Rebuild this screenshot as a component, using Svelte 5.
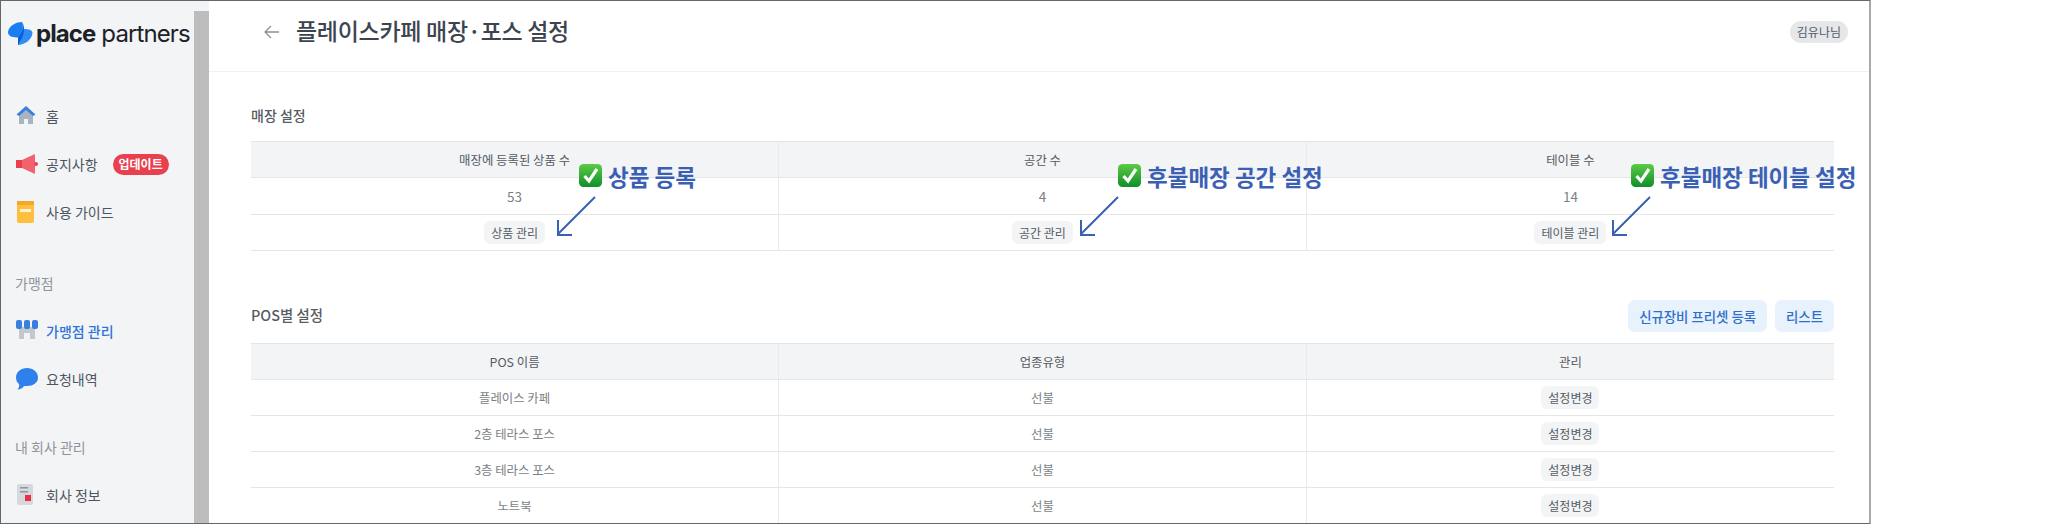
<script>
	const top = [
		{ head: '매장에 등록된 상품 수', count: '53', action: '상품 관리' },
		{ head: '공간 수', count: '4', action: '공간 관리' },
		{ head: '테이블 수', count: '14', action: '테이블 관리' }
	];
	const posList = ['플레이스 카페', '2층 테라스 포스', '3층 테라스 포스', '노트북'];
	// arrow is the x offset of the arrow box from the check icon
	const notes = [
		{ text: '상품 등록', left: 578, arrow: -24 },
		{ text: '후불매장 공간 설정', left: 1117, arrow: -40 },
		{ text: '후불매장 테이블 설정', left: 1630, arrow: -21 }
	];
</script>

<div class="frame">
	<aside class="sidebar">
		<div class="logo">
			<svg width="25" height="23" viewBox="0 0 25 23">
				<path d="M14 0 C9 0 1 3 0 10 C0 15 6 15.500 10 15.500 L15 7 Z" fill="#1a7df0" />
				<path d="M10 23 C16 23 24 18 24.500 11 C24.500 7 18 7 15 7 L10 15.500 Z" fill="#2f8cf5" />
				<path d="M14 0 L15 7 L10 15.500 L10 23 C14 17 19 8 14 0 Z" fill="#0b5fd8" />
			</svg>
			<span class="logo-text"><b>place</b> partners</span>
		</div>

		<nav class="nav">
			<a class="item">
				<svg width="20" height="20" viewBox="0 0 20 20">
					<path d="M3 9 L10 3 L17 9 V19 H12 V14 H8 V19 H3 Z" fill="#a9b4c2" />
					<path d="M0.500 9.500 L10 1 L19.500 9.500 L17 11 L10 5 L3 11 Z" fill="#3a7fe0" />
				</svg>
				<span>홈</span>
			</a>
			<a class="item">
				<svg width="22" height="22" viewBox="0 0 22 22">
					<rect x="0" y="7" width="6" height="8" fill="#e8404f" />
					<path d="M6 7 L19 1 V21 L6 15 Z" fill="#f4616e" />
					<circle cx="20" cy="11" r="2" fill="#e8404f" />
				</svg>
				<span>공지사항</span>
				<em class="badge">업데이트</em>
			</a>
			<a class="item">
				<svg width="20" height="22" viewBox="0 0 20 22">
					<rect x="1" y="0" width="17" height="22" rx="2" fill="#ffbe3d" />
					<rect x="1" y="0" width="17" height="4" fill="#f0a92a" />
					<rect x="4" y="8" width="11" height="3" fill="#fff3d0" />
				</svg>
				<span>사용 가이드</span>
			</a>

			<div class="label first">가맹점</div>
			<a class="item active">
				<svg width="22" height="20" viewBox="0 0 22 20">
					<path d="M3 7 H19 V19 H14 V13 H8 V19 H3 Z" fill="#c3c8cf" />
					<rect x="0" y="0" width="6" height="9" rx="2" fill="#3a7fe0" />
					<rect x="8" y="0" width="6" height="9" rx="2" fill="#3a7fe0" />
					<rect x="16" y="0" width="6" height="9" rx="2" fill="#3a7fe0" />
				</svg>
				<span>가맹점 관리</span>
			</a>
			<a class="item">
				<svg width="22" height="22" viewBox="0 0 22 22">
					<path d="M11 0 C17 0 22 4 22 9.500 C22 15 17 18 11 18 C10 18 9 18 8 18 C7 20 4 21.500 1.500 21.500 C3 20 3.500 18 3 16 C1 14.500 0 12 0 9.500 C0 4 5 0 11 0 Z" fill="#2f80ed" />
				</svg>
				<span>요청내역</span>
			</a>

			<div class="label">내 회사 관리</div>
			<a class="item">
				<svg width="18" height="22" viewBox="0 0 18 22">
					<rect x="1" y="0" width="16" height="21" rx="2" fill="#d5d8dc" />
					<rect x="4" y="3" width="8" height="1.500" fill="#8f959c" />
					<rect x="4" y="7" width="8" height="1.500" fill="#8f959c" />
					<rect x="9" y="11" width="6" height="6" fill="#ee2d43" />
				</svg>
				<span>회사 정보</span>
			</a>
		</nav>
	</aside>

	<div class="scrollbar"><i></i></div>

	<main class="main">
		<header class="header">
			<div class="title">
				<svg width="16" height="14" viewBox="0 0 16 14">
					<path d="M15 7 H1.500 M7 1 L1 7 L7 13" fill="none" stroke="#8b9097" stroke-width="1.300" />
				</svg>
				<h1>플레이스카페 매장·포스 설정</h1>
			</div>
			<span class="user">김유나님</span>
		</header>

		<section class="content">
			<h2 class="store-title">매장 설정</h2>
			<table>
				<thead>
					<tr>
						{#each top as col}
							<th>{col.head}</th>
						{/each}
					</tr>
				</thead>
				<tbody>
					<tr>
						{#each top as col}
							<td class="count">{col.count}</td>
						{/each}
					</tr>
					<tr>
						{#each top as col}
							<td><button class="chip">{col.action}</button></td>
						{/each}
					</tr>
				</tbody>
			</table>

			<div class="pos-head">
				<h2>POS별 설정</h2>
				<div class="actions">
					<button class="primary">신규장비 프리셋 등록</button>
					<button class="primary">리스트</button>
				</div>
			</div>
			<table>
				<thead>
					<tr>
						<th>POS 이름</th>
						<th>업종유형</th>
						<th>관리</th>
					</tr>
				</thead>
				<tbody>
					{#each posList as pos}
						<tr>
							<td>{pos}</td>
							<td>선불</td>
							<td><button class="chip">설정변경</button></td>
						</tr>
					{/each}
				</tbody>
			</table>
		</section>
	</main>

	<svg class="defs" width="0" height="0">
		<linearGradient id="check-fill" x1="0" y1="0" x2="0" y2="1">
			<stop offset="0" stop-color="#5ccb45" />
			<stop offset="1" stop-color="#0f8f2a" />
		</linearGradient>
	</svg>

	{#each notes as note}
		<div class="note" style="left: {note.left}px">
			<div class="note-line">
				<svg width="23" height="23" viewBox="0 0 23 23">
					<rect width="23" height="23" rx="4.500" fill="url(#check-fill)" />
					<path d="M5.500 12 L10 17 L18 5" fill="none" stroke="#fff" stroke-width="3.200" />
				</svg>
				<span>{note.text}</span>
			</div>
			<svg class="arrow" style="left: {note.arrow}px" width="42" height="42" viewBox="0 0 42 42">
				<path d="M40 1 L3 38 M3 24 V39 H17" fill="none" stroke="#3a60b4" stroke-width="2" />
			</svg>
		</div>
	{/each}
</div>

<style>
	:global(body) {
		margin: 0;
		background: #fff;
	}
	.frame {
		position: relative;
		display: flex;
		box-sizing: border-box;
		width: 1871px;
		height: 524px;
		overflow: hidden;
		border: 1px solid #666;
		border-right: 2px solid #a8a8a8;
		font-family: 'Noto Sans CJK KR', 'Noto Sans', sans-serif;
		color: #4e5560;
	}
	.sidebar {
		flex: none;
		width: 193px;
		background: #f2f4f6;
	}
	.logo {
		display: flex;
		align-items: center;
		gap: 3px;
		height: 64px;
		padding-left: 7px;
	}
	.logo-text {
		font-family: Inter, sans-serif;
		font-size: 24px;
		letter-spacing: -0.9px;
		white-space: nowrap;
		color: #1d2128;
	}
	.logo-text b {
		font-weight: 700;
	}
	.nav {
		padding-top: 27px;
	}
	.item {
		display: flex;
		align-items: center;
		height: 48px;
		font-size: 14px;
		padding-left: 15px;
		position: relative;
	}
	.item svg {
		position: absolute;
		left: 15px;
		top: 13px;
	}
	.item span {
		margin-left: 30px;
	}
	.item.active {
		color: #2f74d9;
		font-weight: 500;
	}
	.badge {
		margin-left: 15px;
		padding: 0 6px;
		height: 21px;
		line-height: 20px;
		border-radius: 11px;
		background: #e8404f;
		color: #fff;
		font-style: normal;
		font-size: 12px;
		font-weight: 700;
	}
	.label {
		display: flex;
		align-items: center;
		height: 48px;
		margin-top: 20px;
		padding-left: 14px;
		font-size: 14px;
		color: #8e949b;
	}
	.label.first {
		margin-top: 23px;
	}
	.scrollbar {
		flex: none;
		width: 15px;
		background: #bdbdbd;
		position: relative;
	}
	.scrollbar i {
		position: absolute;
		left: 0;
		top: 0;
		width: 15px;
		height: 10px;
		background: #f2f4f6;
	}
	.main {
		flex: 1;
		min-width: 0;
		background: #fff;
	}
	.header {
		display: flex;
		align-items: center;
		justify-content: space-between;
		height: 71px;
		box-sizing: border-box;
		padding: 0 21px 9px 55px;
		border-bottom: 1px solid #eff0f2;
	}
	.title {
		display: flex;
		align-items: center;
		gap: 16px;
	}
	h1 {
		margin: 0 0 3px;
		font-size: 23px;
		font-weight: 500;
		color: #3d4450;
		letter-spacing: -0.3px;
	}
	.user {
		padding: 0 7px;
		height: 22px;
		line-height: 21px;
		border-radius: 11px;
		background: #e5e7ea;
		font-size: 12px;
		color: #565c64;
	}
	.content {
		padding: 33px 35px 0 42px;
	}
	h2 {
		margin: 0;
		font-size: 14px;
		font-weight: 500;
		color: #565c64;
		line-height: 20px;
	}
	.store-title {
		margin-bottom: 16px;
	}
	table {
		width: 100%;
		border-collapse: collapse;
		table-layout: fixed;
	}
	th,
	td {
		height: 36px;
		padding: 0;
		box-sizing: border-box;
		text-align: center;
		font-size: 12.4px;
		font-weight: 400;
		border-bottom: 1px solid #e4e6e9;
		border-left: 1px solid #e8eaed;
	}
	th:first-child,
	td:first-child {
		border-left: 0;
	}
	th {
		background: #f2f4f6;
		border-top: 1px solid #e4e6e9;
		color: #555b63;
	}
	td {
		color: #7a7f86;
	}
	td.count {
		height: 37px;
		font-size: 13.5px;
	}
	.chip {
		height: 23px;
		padding: 0 7px;
		border: 0;
		border-radius: 6px;
		background: #f2f4f6;
		font: inherit;
		font-size: 12px;
		color: #565c64;
		vertical-align: middle;
	}
	.pos-head {
		display: flex;
		align-items: center;
		justify-content: space-between;
		margin: 49px 0 11px;
	}
	.pos-head h2 {
		font-size: 14.4px;
		margin-top: -2px;
	}
	.actions {
		display: flex;
		gap: 8px;
	}
	.primary {
		height: 32px;
		padding: 0 11px;
		border: 0;
		border-radius: 7px;
		background: #e7f2fd;
		color: #2f6fc9;
		font: inherit;
		font-size: 13.4px;
		font-weight: 500;
	}
	.defs {
		position: absolute;
	}
	.note {
		position: absolute;
		top: 163px;
	}
	.note-line {
		display: flex;
		align-items: center;
		gap: 6px;
		white-space: nowrap;
		font-size: 22.5px;
		font-weight: 700;
		color: #3a60b4;
		height: 23px;
	}
	.arrow {
		position: absolute;
		top: 32px;
	}
</style>
